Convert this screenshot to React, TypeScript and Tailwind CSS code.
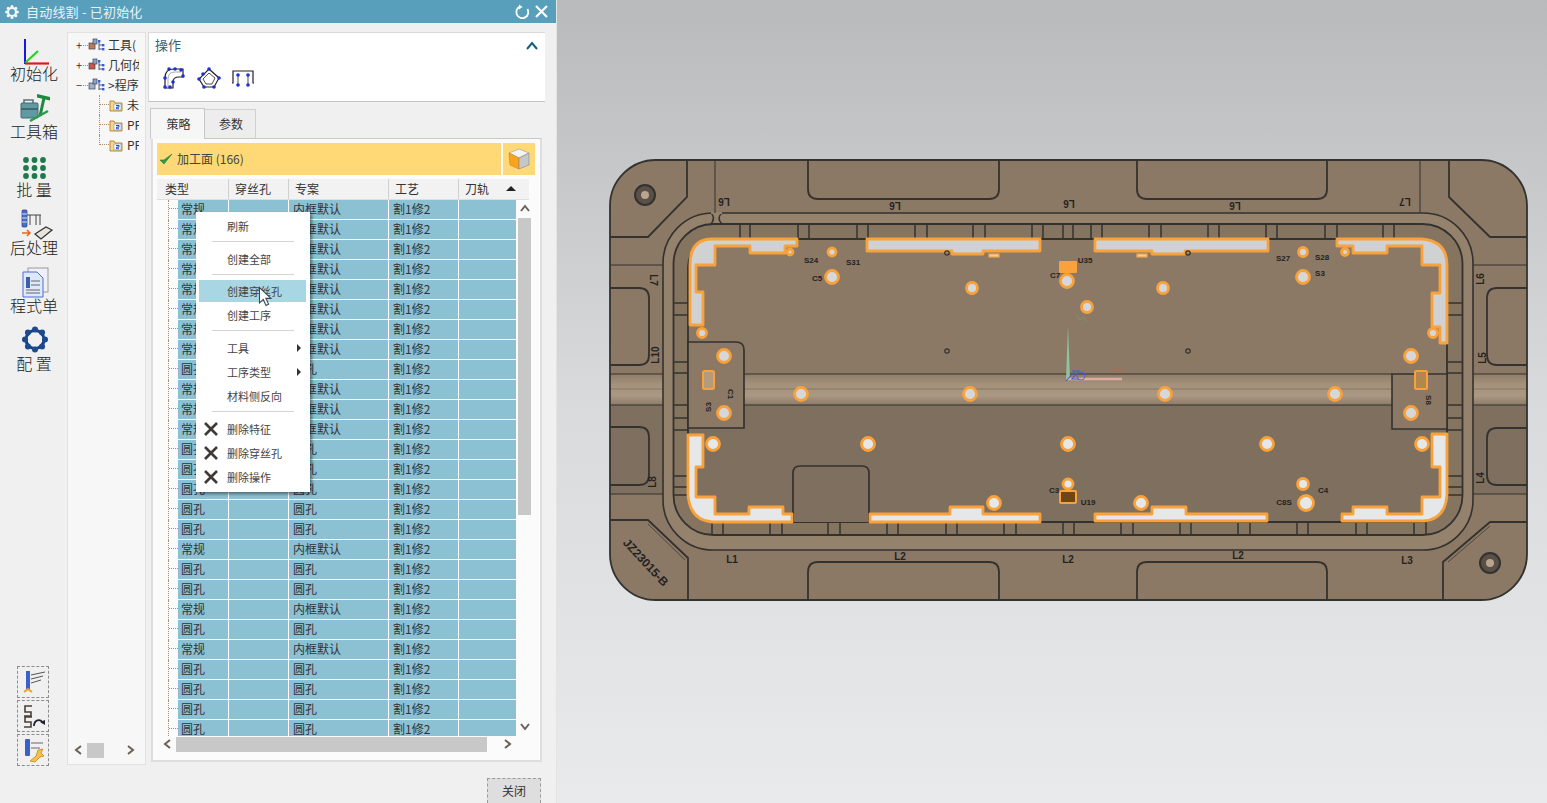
import React from "react";

const CJK = "font-['Noto_Sans_CJK_SC','Noto_Sans',sans-serif]";
const kinds = "常常常常常常常常圆常常常圆圆圆圆圆常圆圆常圆常圆圆圆圆";

function SideItem({ label, children }: { label: string; children: React.ReactNode }) {
  return (
    <div className="h-[58px] flex flex-col items-center">
      <svg width="44" height="30" viewBox="0 0 44 30" className="shrink-0 -mb-[5px] overflow-visible">{children}</svg>
      <div className="text-[16px] leading-[20px] text-[#222] font-light whitespace-nowrap">{label}</div>
    </div>
  );
}

function TreeFolder() {
  return (
    <svg width="14" height="13" viewBox="0 0 14 13" className="shrink-0">
      <path d="M1 2h4l1 2h7v8H1z" fill="#f7d68a" stroke="#b98a3a" />
      <rect x="5" y="5" width="7" height="6" fill="#fff" stroke="#7f93b5" strokeWidth="0.6" />
      <path d="M7 6.5h3v1.7H7.5v1.6H10" fill="none" stroke="#1f3fd0" strokeWidth="1" />
    </svg>
  );
}

function TreeHead({ sign, label, color }: { sign: string; label: string; color: string }) {
  return (
    <div className="h-5 w-max flex items-center pl-[8px] whitespace-nowrap">
      <span className="w-[7px] text-[11px] leading-none text-[#333]">{sign}</span>
      <span className="w-[5px] border-t border-dotted border-[#b08a6a]" />
      <svg width="18" height="15" viewBox="0 0 18 15" className="shrink-0 mr-[2px]">
        <rect x="1" y="5" width="6" height="6" fill={color} stroke="#445" strokeWidth="0.7" />
        <rect x="5" y="1" width="4" height="5" fill="#8aa4c4" stroke="#445" strokeWidth="0.7" />
        <path d="M11 4v8M11 7h3M11 11h3" stroke="#335" strokeWidth="0.8" fill="none" />
        <rect x="10" y="2" width="2.4" height="2.4" fill="#3c5fd0" />
        <rect x="14" y="6" width="2.4" height="2.4" fill="#3c5fd0" />
        <rect x="14" y="10" width="2.4" height="2.4" fill="#3c5fd0" />
      </svg>
      <span className="text-[12px] leading-none text-[#333]">{label}</span>
    </div>
  );
}

function TreeChild({ label, last }: { label: string; last?: boolean }) {
  return (
    <div className="h-5 w-max flex items-center pl-[31px] whitespace-nowrap">
      <div className={`w-[10px] self-start border-l border-dotted border-[#b08a6a] ${last ? "h-[10px]" : "h-5"}`}>
        <div className="h-[10px] border-b border-dotted border-[#b08a6a]" />
      </div>
      <TreeFolder />
      <span className="ml-[4px] text-[12px] leading-none text-[#333]">{label}</span>
    </div>
  );
}

function Row({ i }: { i: number }) {
  const round = kinds[i] === "圆";
  const cell = "bg-[#8bc1d2] border-r border-b border-white text-[12px] leading-[18px] text-[#333] overflow-hidden whitespace-nowrap";
  return (
    <div className="grid grid-cols-[21px_51px_60px_100px_70px_57px] h-5">
      <div className="ml-[11px] h-full border-l border-dotted border-[#a89078]">
        <div className="h-[9px] border-b border-dotted border-[#b08a6a]" />
      </div>
      <div className={`${cell} pl-[3px]`}>{round ? "圆孔" : "常规"}</div>
      <div className={cell} />
      <div className={`${cell} pl-[4px]`}>{round ? "圆孔" : "内框默认"}</div>
      <div className={`${cell} pl-[4px]`}>割1修2</div>
      <div className={`${cell} border-r-0`} />
    </div>
  );
}

function MenuSep() {
  return <div className="h-px bg-[#d4d4d4] ml-[13px] mr-[12px] mt-[3px] mb-[5px]" />;
}

function MenuItem({ label, active, arrow, del }: { label: string; active?: boolean; arrow?: boolean; del?: boolean }) {
  return (
    <div className={`relative flex items-center pl-[28px] text-[11px] text-[#444] whitespace-nowrap ${active ? "h-[22px] my-px bg-[#a9d6e3]" : "h-[24px]"}`}>
      {del && (
        <svg width="16" height="16" viewBox="0 0 16 16" className="absolute left-[4px] top-[4px]">
          <path d="M2 2l12 12M14 2L2 14" stroke="#3d3a37" strokeWidth="2.6" />
        </svg>
      )}
      {label}
      {arrow && <span className="absolute right-[5px] top-[8px] w-0 h-0 border-y-[4px] border-y-transparent border-l-[4px] border-l-[#333]" />}
    </div>
  );
}

function ArrowBtn({ dir }: { dir: "l" | "r" | "u" | "d" }) {
  const d = { l: "M7 1L2 5l5 4", r: "M2 1l5 4-5 4", u: "M1 7l4-5 4 5", d: "M1 2l4 5 4-5" }[dir];
  return (
    <svg width="10" height="10" viewBox="0 0 10 10" className="shrink-0">
      <path d={d} fill="none" stroke="#6a6156" strokeWidth="2" />
    </svg>
  );
}

function ToolBtn({ children }: { children: React.ReactNode }) {
  return (
    <div className="w-8 h-8 border border-dashed border-[#8c8c8c] flex items-center justify-center">
      <svg width="28" height="28" viewBox="0 0 28 28">{children}</svg>
    </div>
  );
}

const groupTicksTop = [740, 750, 798, 809, 857, 868, 915, 927, 973, 985, 1032, 1043, 1063, 1073, 1091, 1102, 1149, 1161, 1208, 1219, 1266, 1277, 1325, 1337, 1383, 1394];
const groupTicksBottom = [712, 723, 770, 782, 828, 840, 887, 898, 946, 957, 1004, 1016, 1063, 1074, 1121, 1133, 1180, 1191, 1238, 1250, 1297, 1308, 1356, 1367, 1414, 1426];
const sideTicks = [303, 315, 362, 373, 405, 418, 430, 476, 487, 495];

const holes: [number, number, number][] = [
  [832, 277, 6.5], [832, 252, 4], [790, 252, 3], [972, 288, 5.5], [1067, 281, 6.5], [702, 333, 4.5], [724, 356, 6.5],
  [1163, 288, 5.5], [1087, 307, 5.5], [1303, 252, 4.5], [1303, 277, 6.5], [1345, 252, 3.5], [1433, 333, 4.5], [1411, 356, 6.5],
  [801, 394, 6.5], [970, 394, 6.5], [724, 413, 6.5], [1165, 394, 6.5], [1335, 394, 6.5], [1411, 413, 6.5],
  [713, 444, 6.5], [868, 444, 6.5], [1068, 444, 6.5], [1267, 444, 6.5], [1422, 444, 6.5],
  [1068, 484, 5], [994, 503, 6.5], [1141, 503, 6.5], [1303, 484, 5.5], [1306, 503, 7.5],
];

const cutouts: [string, string][] = [
  ["#d0d1d3", "M690 325V265Q690 239 712 239H797V246H785V253H750V246H715V265H696V292H703V325Z"],
  ["#d0d1d3", "M867 239H1040V251H983V254H952V251H867Z"],
  ["#d0d1d3", "M1095 239H1268V251H1185V254H1152V251H1095Z"],
  ["#d0d1d3", "M1337 239H1422Q1447 241 1447 265V343H1440V327H1432V293H1440V265H1422V246H1387V253H1353V246H1337Z"],
  ["#e6e7e9", "M688 435H703V467H696V497H715V514H749V507H783V514H792V522H712Q690 520 688 495Z"],
  ["#e6e7e9", "M870 514H950V507H983V514H1040V522H870Z"],
  ["#e6e7e9", "M1095 514H1152V507H1186V514H1267V521H1095Z"],
  ["#e6e7e9", "M1342 514H1353V507H1387V514H1422V497H1440V467H1432V434H1447V495Q1445 520 1423 521H1342Z"],
];

const labels: [string, number, number, number, number][] = [
  ["L6", 724, 201, 180, 10], ["L6", 895, 205, 180, 10], ["L6", 1069, 203, 180, 10], ["L6", 1235, 205, 180, 10], ["L7", 1405, 201, 180, 10],
  ["L7", 653, 280, 90, 10], ["L10", 656, 355, 270, 10], ["L8", 653, 482, 270, 10], ["L6", 1481, 279, 270, 10], ["L5", 1483, 358, 270, 10], ["L4", 1481, 478, 270, 10],
  ["L1", 732, 560, 0, 10], ["L2", 900, 557, 0, 10], ["L2", 1068, 560, 0, 10], ["L2", 1238, 556, 0, 10], ["L3", 1407, 561, 0, 10],
  ["S24", 811, 261, 0, 8], ["S31", 853, 263, 0, 8], ["C5", 817, 279, 0, 8], ["S27", 1283, 259, 0, 8], ["S28", 1322, 258, 0, 8], ["S3", 1320, 274, 0, 8],
  ["C7", 1055, 276, 0, 8], ["U35", 1085, 261, 0, 8], ["C3", 1054, 491, 0, 8], ["U19", 1088, 503, 0, 8], ["C4", 1323, 491, 0, 8], ["C8S", 1284, 503, 0, 8],
  ["C1", 730, 394, 90, 8], ["S3", 709, 407, 270, 8], ["S8", 1428, 400, 90, 8],
];

function Part() {
  const ink = "#33322f";
  const rs = [
    [808, 160, 191], [1137, 160, 190],
  ];
  return (
    <svg width="919" height="442" viewBox="609 159 919 442" className="block">
      <defs>
        <clipPath id="outer"><rect x="610" y="160" width="917" height="440" rx="46" /></clipPath>
        <clipPath id="pocket"><rect x="688" y="239" width="759" height="283" rx="28" /></clipPath>
        <linearGradient id="band" x1="0" y1="0" x2="0" y2="1">
          <stop offset="0" stopColor="#8f7d69" />
          <stop offset="0.35" stopColor="#a6927b" />
          <stop offset="0.7" stopColor="#ab9883" />
          <stop offset="1" stopColor="#8d7b68" />
        </linearGradient>
      </defs>
      <rect x="610" y="160" width="917" height="440" rx="46" fill="#8b7966" />
      <g clipPath="url(#outer)">
        <rect x="610" y="374" width="917" height="31" fill="url(#band)" />
        <rect x="610" y="405" width="917" height="89" fill="#7f6f5f" />
        <path d="M1527 522H1490L1443 562V600H1527Z" fill="#8b7966" />
        <path d="M610 520H648L688 558V600H610Z" fill="#8b7966" />
      </g>
      <rect x="610" y="160" width="917" height="440" rx="46" fill="none" stroke={ink} strokeWidth="1.8" />
      <rect x="663" y="213" width="810" height="337" rx="50" fill="#94826d" stroke={ink} strokeWidth="1.6" />
      <rect x="673.5" y="224" width="789" height="311" rx="40" fill="#85745f" stroke={ink} strokeWidth="1.8" />
      <rect x="688" y="239" width="759" height="283" rx="28" fill="#8b7966" />
      <g clipPath="url(#pocket)">
        <rect x="688" y="405" width="759" height="117" fill="#7f6f5f" />
        <rect x="744" y="374" width="648" height="31" fill="url(#band)" />
      </g>
      <rect x="688" y="239" width="759" height="283" rx="28" fill="none" stroke={ink} strokeWidth="1.8" />

      <path d="M711 213Q716 218 711 224M722 213Q716 218 722 224" stroke={ink} strokeWidth="1.6" fill="none" />
      <path d="M711 213H722" stroke="#94826d" strokeWidth="2.2" />
      <path d="M663 374H610M663 405H610M1473 374H1527M1473 405H1527M744 374H1392M744 405H1392M610 265H663M1473 265H1527M610 494H663M1473 494H1527M715 160V213M1420 160V213" stroke={ink} strokeWidth="1" fill="none" />
      <path d="M610 389H663M744 389H1392M1473 389H1527" stroke={ink} strokeWidth="0.5" opacity="0.6" fill="none" />

      {groupTicksTop.map((x) => <path key={x} d={`M${x} 224V239`} stroke={ink} strokeWidth="1.5" />)}
      {groupTicksBottom.map((x) => <path key={x} d={`M${x} 522V535`} stroke={ink} strokeWidth="1.5" />)}
      {sideTicks.map((y) => <path key={y} d={`M674 ${y}H688M1447 ${y}H1462`} stroke={ink} strokeWidth="1.4" />)}

      <path d="M688 342H736Q744 342 744 350V428H688Z" fill="#8b7966" stroke={ink} strokeWidth="1.7" />
      <path d="M1392 374V429H1447V374Z" fill="#8b7966" stroke={ink} strokeWidth="1.6" />

      {rs.map(([x, y, w]) => (
        <g key={x}>
          <path d={`M${x} ${y}V${y + 29}Q${x} ${y + 39} ${x + 10} ${y + 39}H${x + w - 10}Q${x + w} ${y + 39} ${x + w} ${y + 29}V${y}`} fill="none" stroke={ink} strokeWidth="1.8" />
          <path d={`M${x} 600V572Q${x} 562 ${x + 10} 562H${x + w - 10}Q${x + w} 562 ${x + w} 572V600`} fill="none" stroke={ink} strokeWidth="1.8" />
        </g>
      ))}
      <path d="M610 288H639Q649 288 649 298V355Q649 365 639 365H610M610 427H639Q649 427 649 437V475Q649 485 639 485H610M1527 288H1497Q1487 288 1487 298V355Q1487 365 1497 365H1527M1527 428H1497Q1487 428 1487 438V475Q1487 485 1497 485H1527" fill="none" stroke={ink} strokeWidth="1.8" />
      <path d="M687 160V197L648 237H610M1449 160V197L1490 237H1527M610 520H648L688 558V600M1527 522H1490L1443 562V600" fill="none" stroke={ink} strokeWidth="1.8" />
      <path d="M648 524L685 560M1490 526L1448 562" fill="none" stroke={ink} strokeWidth="1" opacity="0.7" />
      <path d="M793 522V473Q793 466 800 466H862Q869 466 869 473V522" fill="#7f6f5f" stroke={ink} strokeWidth="1.7" />

      {cutouts.map(([f, d]) => <path key={d} d={d} fill={f} stroke="#f9a23b" strokeWidth="2.8" strokeLinejoin="round" />)}
      <rect x="989" y="254" width="10" height="3" fill="#d2d3d5" stroke="#f9a23b" strokeWidth="1.2" />
      <rect x="1137" y="254" width="10" height="3" fill="#d2d3d5" stroke="#f9a23b" strokeWidth="1.2" />
      <rect x="1059" y="261" width="18" height="12" rx="1" fill="#f9a23b" />
      <rect x="703" y="371" width="11" height="18" rx="1.5" fill="#b39b7e" stroke="#f9a23b" strokeWidth="2" />
      <rect x="1415" y="371" width="12" height="18" rx="1.5" fill="#b3864e" stroke="#f9a23b" strokeWidth="2" />
      <rect x="1060" y="491" width="16" height="12" rx="1" fill="#6e4616" stroke="#f9a23b" strokeWidth="2" />
      {holes.map(([x, y, r]) => <circle key={`${x}-${y}`} cx={x} cy={y} r={r} fill={y > 420 ? "#e6e7e9" : "#d6d7d9"} stroke="#f9a23b" strokeWidth="2.8" />)}
      {[[947, 253], [947, 351], [1188, 253], [1188, 351]].map(([x, y]) => (
        <circle key={`${x}-${y}`} cx={x} cy={y} r="2.2" fill="none" stroke={ink} strokeWidth="1.2" />
      ))}
      {[[645, 195], [1490, 563]].map(([x, y]) => (
        <g key={x}>
          <circle cx={x} cy={y} r="10" fill="#5a5048" stroke={ink} strokeWidth="2" />
          <circle cx={x} cy={y} r="4" fill="#b9a68f" />
        </g>
      ))}
      {labels.map(([t, x, y, a, s], i) => (
        <text key={i} x={x} y={y} fontSize={s} fontWeight="700" fontFamily="Liberation Sans, sans-serif" fill="#24221f" textAnchor="middle" dominantBaseline="middle" transform={`rotate(${a} ${x} ${y})`}>{t}</text>
      ))}
      <text x="645" y="563" fontSize="12" fontWeight="700" fontFamily="Liberation Sans, sans-serif" fill="#24221f" textAnchor="middle" dominantBaseline="middle" transform="rotate(47 645 563)">JZ23015-B</text>

      <path d="M1068 326L1066 380H1070Z" fill="#8fc4a0" />
      <path d="M1068 379H1122" stroke="#e3aaa2" strokeWidth="2.4" />
      <path d="M1066 381L1075 371M1072 371h7l-7 8h7" stroke="#3e5fd8" strokeWidth="1.1" fill="none" />
      <circle cx="1081" cy="376" r="4" fill="none" stroke="#3e5fd8" strokeWidth="0.8" />
      <path d="M1112 372l4-4 4 5 4-5" stroke="#b5654c" strokeWidth="1" fill="none" />
      <path d="M1076 315l4 5 3-3 4 4" stroke="#7f9a62" strokeWidth="0.9" fill="none" />
    </svg>
  );
}

export default function App() {
  return (
    <div className={`flex w-[1547px] h-[803px] overflow-hidden ${CJK}`}>
      <div className="w-[557px] shrink-0 flex flex-col bg-[#f0f0f0] border-r border-[#e4e4e4]">
        {/* title bar */}
        <div className="h-[23px] bg-[#589fbc] flex items-center pl-[5px] pr-[8px] text-white">
          <svg width="14" height="14" viewBox="0 0 14 14">
            {[0, 45, 90, 135, 180, 225, 270, 315].map((a) => (
              <circle key={a} cx={7 + 5.4 * Math.cos((a * Math.PI) / 180)} cy={7 + 5.4 * Math.sin((a * Math.PI) / 180)} r="1.5" fill="#f2f6f8" />
            ))}
            <circle cx="7" cy="7" r="4" fill="none" stroke="#f2f6f8" strokeWidth="2.2" />
          </svg>
          <span className="ml-[7px] text-[13px] leading-none text-[#e9f2f6] tracking-[0.2px]">自动线割 - 已初始化</span>
          <svg width="16" height="16" viewBox="0 0 16 16" className="ml-auto mr-[5px]" fill="none">
            <path d="M6 2.6A6 6 0 1 0 13.4 5" stroke="#fff" strokeWidth="1.8" />
            <path d="M5 0.5v5l3.5-2.5z" fill="#fff" />
          </svg>
          <svg width="13" height="13" viewBox="0 0 13 13"><path d="M1 1l11 11M12 1L1 12" stroke="#fff" strokeWidth="2.2" /></svg>
        </div>

        {/* body */}
        <div className="flex-1 flex min-h-0">
          {/* sidebar */}
          <div className="w-[67px] shrink-0 flex flex-col pt-[15px] pb-[2px] pl-[1px]">
            <SideItem label="初始化">
              <path d="M13 1V26" stroke="#1818e0" strokeWidth="2" />
              <path d="M13 25L26 13" stroke="#16d816" strokeWidth="2" />
              <path d="M13 25.5H37" stroke="#e01818" strokeWidth="2.2" />
            </SideItem>
            <SideItem label="工具箱">
              <path d="M12 7V4H21V7" fill="none" stroke="#5a6d70" strokeWidth="1.5" />
              <rect x="9" y="7" width="17" height="15" rx="1" fill="#5f9aa3" stroke="#3f6a72" />
              <rect x="9" y="12" width="17" height="2" fill="#3f6a72" />
              <path d="M32 2L28 20" stroke="#1f8a3a" strokeWidth="3" />
              <path d="M25 -2l13 3 0 3.5-13-3z" fill="#1f8a3a" />
              <path d="M18 25L36 15" stroke="#2c9a45" strokeWidth="2.5" />
            </SideItem>
            <SideItem label="批 量">
              {[0, 1, 2].flatMap((r) => [0, 1, 2].map((c) => (
                <circle key={`${r}-${c}`} cx={c * 8.5 + 14} cy={r * 8 + 6} r="2.9" fill="#1d7a4c" />
              )))}
            </SideItem>
            <SideItem label="后处理">
              <rect x="10" y="-2" width="5" height="17" rx="1" fill="#4a6fc9" stroke="#26367a" strokeWidth="0.7" />
              <path d="M10 2h5M10 6h5M10 10h5" stroke="#d8def0" />
              <path d="M15 3H29M18 3v10M24 3v10M28 3v10" stroke="#444" strokeWidth="1" fill="none" />
              <path d="M23 22l11-7 6 3-11 9z" fill="#e8e4dc" stroke="#333" strokeWidth="1.2" />
              <path d="M10 21h8m-3-3l3 3-3 3" stroke="#e06a1e" strokeWidth="1.5" fill="none" />
            </SideItem>
            <SideItem label="程式单">
              <rect x="16" y="-2" width="20" height="24" fill="#f0f0f8" stroke="#9a9a9a" />
              <path d="M11 2h14l6 6v19H11z" fill="#dfe8fb" stroke="#4a6fd0" />
              <rect x="14" y="7" width="4" height="11" fill="#3c5fa8" />
              <path d="M19 11h9M19 15h9M14 20h14M14 23h14" stroke="#555" strokeWidth="0.9" />
            </SideItem>
            <SideItem label="配 置">
              <circle cx="23" cy="11.5" r="9" fill="none" stroke="#15407f" strokeWidth="3" />
              {[0, 45, 90, 135, 180, 225, 270, 315].map((a) => (
                <circle key={a} cx={23 + 10 * Math.cos((a * Math.PI) / 180)} cy={11.5 + 10 * Math.sin((a * Math.PI) / 180)} r="3" fill="#1d4a8f" />
              ))}
            </SideItem>

            <div className="mt-auto ml-[16px] flex flex-col gap-[2px]">
              <ToolBtn>
                <rect x="7" y="3" width="4" height="19" fill="#3c5fc8" />
                <path d="M12 7L26 4M12 11L24 8M12 15L22 12" stroke="#555" strokeWidth="1" />
                <path d="M5 24l4-3 4 3" stroke="#e8a22a" strokeWidth="2" fill="none" />
              </ToolBtn>
              <ToolBtn>
                <path d="M13 4H6v6h6v4H5M13 15H6v5h6v5H5" stroke="#4a4038" strokeWidth="1.6" fill="none" />
                <path d="M15 24c0-6 6-8 9-3" stroke="#223" strokeWidth="1.8" fill="none" />
                <path d="M21 20l5 3 0-5z" fill="#223" />
              </ToolBtn>
              <ToolBtn>
                <rect x="6" y="3" width="5" height="17" rx="1" fill="#3c5fc8" />
                <path d="M12 7H24M12 12H21" stroke="#666" strokeWidth="1" />
                <path d="M11 25l6-5 2-6 5-1-2 4 3 3-4 1-5 5z" fill="#f5c04a" stroke="#c88820" strokeWidth="0.8" />
              </ToolBtn>
            </div>
          </div>

          {/* tree panel */}
          <div className="w-[79px] shrink-0 h-[733px] mt-[9px] bg-[#f7f7f7] border border-[#e2e2e2] flex flex-col overflow-hidden">
            <div className="pt-[2px] flex-1 w-[71px] overflow-hidden">
              <TreeHead sign="+" label="工具(" color="#c07a5a" />
              <TreeHead sign="+" label="几何体" color="#c9584a" />
              <TreeHead sign="−" label=">程序" color="#9ab4cf" />
              <TreeChild label="未" />
              <TreeChild label="PF" />
              <TreeChild label="PF" last />
            </div>
            <div className="h-[16px] mb-[6px] flex items-center pl-[6px] pr-[9px]">
              <ArrowBtn dir="l" />
              <div className="w-[17px] h-[15px] bg-[#c8c8c8] ml-[3px]" />
              <div className="ml-auto"><ArrowBtn dir="r" /></div>
            </div>
          </div>

          {/* right */}
          <div className="flex-1 min-w-0 pl-[2px] pt-[9px] pr-[11px] flex flex-col">
            <div className="h-[70px] bg-white border-t border-l border-b border-[#dadada] border-b-[#c4c4c4] relative pl-[6px] pt-[2px]">
              <div className="text-[13px] leading-[20px] text-[#3c5f70]">操作</div>
              <svg width="12" height="9" viewBox="0 0 12 9" className="absolute right-[7px] top-[8px]">
                <path d="M1 8l5-6 5 6" fill="none" stroke="#0f5f80" strokeWidth="2" />
              </svg>
              <div className="flex mt-[11px] ml-[8px] gap-[10px]">
                <svg width="24" height="24" viewBox="0 0 24 24">
                  <path d="M2 22V12Q2 3 11 3H20V11H16Q10 11 10 16V22Z" fill="none" stroke="#222" strokeWidth="1.2" />
                  <path d="M5 22V13Q5 6 12 6H18" fill="none" stroke="#888" strokeWidth="0.7" />
                  {[[6, 3], [12, 3], [18, 4], [20, 10], [2, 12], [10, 16], [2, 21], [7, 21]].map(([x, y]) => <circle key={`${x}${y}`} cx={x} cy={y} r="1.8" fill="#1c2fd8" />)}
                </svg>
                <svg width="24" height="24" viewBox="0 0 24 24">
                  <path d="M12 3L22 12 17 21H7L2 13Z" fill="none" stroke="#222" strokeWidth="1.2" />
                  <path d="M12 7L18 12 15 18H9L6 13Z" fill="none" stroke="#222" strokeWidth="0.8" />
                  {[[12, 3], [6, 8], [22, 12], [2, 13], [17, 21], [7, 21]].map(([x, y]) => <circle key={`${x}${y}`} cx={x} cy={y} r="1.8" fill="#1c2fd8" />)}
                </svg>
                <svg width="24" height="24" viewBox="0 0 24 24">
                  <path d="M1 17H2V5H22V17H23" fill="none" stroke="#222" strokeWidth="1.2" />
                  <path d="M7 8V20M17 8V20" fill="none" stroke="#222" strokeWidth="0.8" />
                  {[[7, 9], [17, 9], [7, 19], [17, 19]].map(([x, y]) => <circle key={`${x}${y}`} cx={x} cy={y} r="1.8" fill="#1c2fd8" />)}
                </svg>
              </div>
            </div>

            {/* tabs */}
            <div className="flex mt-[6px] h-[30px] pl-[2px] relative z-10">
              <div className="w-[55px] h-[31px] bg-[#f6f6f6] border border-b-0 border-[#c8c8c8] flex items-center justify-center pl-[2px] text-[12px] text-[#333]">策略</div>
              <div className="w-[51px] mt-[1px] h-[29px] bg-[#ededed] border-r border-t border-[#d0d0d0] flex items-center justify-center pl-[2px] text-[12px] text-[#333]">参数</div>
            </div>

            {/* tab content */}
            <div className="ml-[3px] mr-[-7px] w-[391px] h-[624px] bg-[#fbfbfb] border-2 border-[#dedede] border-t-[#c8c8c8] border-t pl-[4px] pt-[4px] relative">
              <div className="flex gap-[2px] h-[32px]">
                <div className="w-[344px] shrink-0 bg-[#ffd976] flex items-center pl-[2px]">
                  <svg width="14" height="14" viewBox="0 0 14 14"><path d="M1 8l4 4 8-10-8 6z" fill="#2f9a4a" stroke="#1d7a3a" strokeWidth="0.6" /></svg>
                  <span className="ml-[4px] text-[12px] text-[#444]">加工面 (166)</span>
                </div>
                <div className="w-[32px] shrink-0 bg-[#ffd976] flex items-center justify-center">
                  <svg width="24" height="24" viewBox="0 0 24 24">
                    <path d="M12 2l10 4-10 5L2 6z" fill="#f4f4f4" stroke="#999" strokeWidth="0.6" />
                    <path d="M2 6l10 5v11L3 18z" fill="#f7a51e" stroke="#d87a10" strokeWidth="0.6" />
                    <path d="M22 6L12 11v11l10-4z" fill="#c4c8c6" stroke="#888" strokeWidth="0.6" />
                  </svg>
                </div>
              </div>
              <div className="mt-[4px] h-[21px] w-[372px] flex bg-[#f2f2f2] border-b border-[#dedede] text-[12px] leading-[19px] text-[#333]">
                <div className="w-[72px] pl-[8px] border-r border-[#cfcfcf]">类型</div>
                <div className="w-[60px] pl-[6px] border-r border-[#cfcfcf]">穿丝孔</div>
                <div className="w-[100px] pl-[6px] border-r border-[#cfcfcf]">专案</div>
                <div className="w-[70px] pl-[6px] border-r border-[#cfcfcf]">工艺</div>
                <div className="flex-1 pl-[6px] relative">刀轨
                  <span className="absolute left-[47px] top-[7px] w-0 h-0 border-x-[5px] border-x-transparent border-b-[5px] border-b-[#222]" />
                </div>
              </div>
              <div className="relative">
                <div className="flex h-[536px] overflow-hidden">
                  <div className="w-[359px] shrink-0">
                    {Array.from(kinds).map((_, i) => <Row key={i} i={i} />)}
                  </div>
                  <div className="w-[17px] flex flex-col items-center">
                    <div className="h-[18px] flex items-center"><ArrowBtn dir="u" /></div>
                    <div className="w-[13px] h-[297px] bg-[#c8c8c8]" />
                    <div className="mt-auto h-[18px] flex items-center"><ArrowBtn dir="d" /></div>
                  </div>
                </div>
                <div className="h-[16px] w-[360px] flex items-center pl-[6px]">
                  <ArrowBtn dir="l" />
                  <div className="ml-[3px] w-[311px] h-[15px] bg-[#c8c8c8]" />
                  <div className="ml-[16px]"><ArrowBtn dir="r" /></div>
                </div>

                {/* context menu */}
                <div className="absolute left-[39px] top-[12px] w-[114px] h-[280px] bg-white shadow-[2px_2px_3px_rgba(0,0,0,0.45)] pt-[2px] pl-[3px] pr-[4px]">
                  <MenuItem label="刷新" />
                  <MenuSep />
                  <MenuItem label="创建全部" />
                  <MenuSep />
                  <MenuItem label="创建穿丝孔" active />
                  <MenuItem label="创建工序" />
                  <MenuSep />
                  <MenuItem label="工具" arrow />
                  <MenuItem label="工序类型" arrow />
                  <MenuItem label="材料侧反向" />
                  <MenuSep />
                  <MenuItem label="删除特征" del />
                  <MenuItem label="删除穿丝孔" del />
                  <MenuItem label="删除操作" del />
                  <svg width="18" height="22" viewBox="0 0 18 22" className="absolute left-[62px] top-[74px]">
                    <path d="M1.5 1.5V17l3.8-3.6 2.7 6 2.6-1.2-2.7-5.8H13z" fill="#fff" stroke="#3a4a55" strokeWidth="1.1" />
                  </svg>
                </div>
              </div>
            </div>
          </div>
        </div>

        {/* footer */}
        <div className="h-[35px] shrink-0 flex justify-end items-end pr-[15px]">
          <div className="w-[54px] h-[25px] bg-[#dedede] border border-dashed border-[#9a9a9a] border-b-0 flex items-center justify-center text-[12px] text-[#333]">关闭</div>
        </div>
      </div>

      {/* viewport */}
      <div className="flex-1 bg-gradient-to-b from-[#b9babc] via-[#d9dadc] via-50% to-[#e9eaeb] pl-[52px] pt-[159px]">
        <Part />
      </div>
    </div>
  );
}
